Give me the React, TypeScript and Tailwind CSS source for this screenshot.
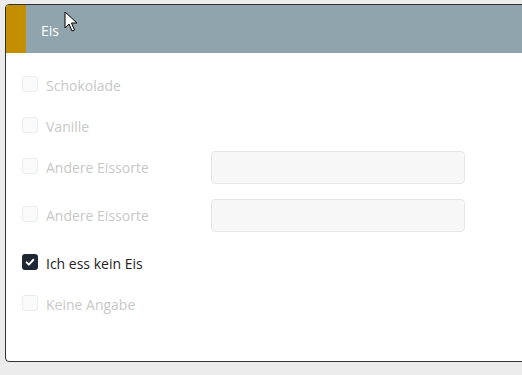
import React from 'react';

type Row = { label: string; checked?: boolean; input?: boolean };

const rows: Row[] = [
  { label: 'Schokolade' },
  { label: 'Vanille' },
  { label: 'Andere Eissorte', input: true },
  { label: 'Andere Eissorte', input: true },
  { label: 'Ich ess kein Eis', checked: true },
  { label: 'Keine Angabe' },
];

const Checkbox = ({ checked }: { checked?: boolean }) =>
  checked ? (
    <span className="-mt-[3px] flex h-4 w-4 items-center justify-center rounded-[3px] bg-[#1e2833]">
      <svg viewBox="0 0 16 16" className="h-3 w-3" fill="none" stroke="white" strokeWidth="2.6" strokeLinecap="round" strokeLinejoin="round">
        <path d="M3.5 8.5l3 3 6-6.5" />
      </svg>
    </span>
  ) : (
    <span className="-mt-[3px] h-4 w-4 rounded-[3px] border border-[#ececec] bg-[#fafafa]" />
  );

const Cursor = () => (
  <svg className="absolute left-[64px] top-[11px]" width="14" height="22" viewBox="0 0 14 22">
    <path d="M1 1 L1 17 L5 13 L8 20 L10.5 19 L7.5 12 L13 12 Z" fill="white" stroke="black" strokeWidth="1" strokeLinejoin="round" />
  </svg>
);

export default function App() {
  return (
    <div
      className="relative h-[375px] w-[522px] overflow-hidden bg-[#ececec] pl-[5px] pt-[4px]"
      style={{ fontFamily: '"Open Sans", "Noto Sans", sans-serif' }}
    >
      <div className="h-[358px] w-[530px] overflow-hidden rounded-[4px] border border-[#2f3336] bg-white">
        <div className="flex h-[48px] bg-[#90a4ae]">
          <div className="w-[20px] bg-[#c38f00]" />
          <div className="flex items-center pl-[15px] pt-[2px] text-[14px] text-white">Eis</div>
        </div>
        <div className="flex flex-col gap-[8px] pl-[16px] pt-[16px]">
          {rows.map((r, i) => (
            <div key={i} className={`flex h-[33px] items-center ${r.input ? 'mb-[7px]' : ''}`}>
              <Checkbox checked={r.checked} />
              <span className={`ml-[8px] w-[165px] text-[14px] ${r.checked ? 'text-[#222]' : 'text-[#c8c8c8]'}`}>
                {r.label}
              </span>
              {r.input && (
                <div className="h-[33px] w-[254px] rounded-[4px] border border-[#e6e6e6] bg-[#f7f7f7]" />
              )}
            </div>
          ))}
        </div>
      </div>
      <Cursor />
    </div>
  );
}
